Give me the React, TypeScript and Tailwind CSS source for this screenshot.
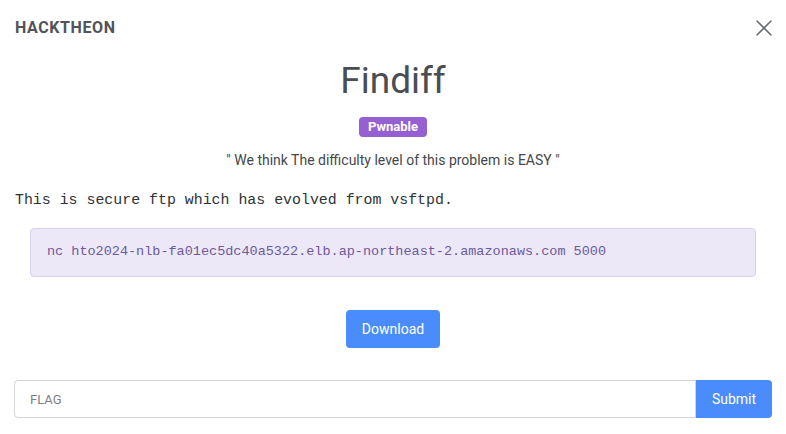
import React, { useState } from "react";

export default function App() {
    const [flag, setFlag] = useState("");

    const problem = {
        title: "Findiff",
        category: "Pwnable",
        difficulty: "EASY",
        description: "This is secure ftp which has evolved from vsftpd.",
        connection: "nc hto2024-nlb-fa01ec5dc40a5322.elb.ap-northeast-2.amazonaws.com 5000",
    };

    return (
        <div className="w-[786px] h-[434px] bg-white text-[#4a4d52] font-['Roboto','Liberation_Sans',sans-serif] overflow-hidden">
            <div className="flex items-center justify-between pl-[15px] pr-[13px] pt-[16px]">
                <span className="text-[16px] font-bold tracking-[0.6px] text-[#505458]">HACKTHEON</span>
                <button className="text-[#6b6f73]">
                    <svg width="18" height="18" viewBox="0 0 18 18" fill="none">
                        <path d="M2 2L16 16M16 2L2 16" stroke="currentColor" strokeWidth="1.6" strokeLinecap="round" />
                    </svg>
                </button>
            </div>

            <div className="flex flex-col items-center">
                <h1 className="mt-[19px] text-[37px] leading-[44px] text-[#4a4d52]">{problem.title}</h1>
                <span className="mt-[14px] h-[20px] px-[9px] flex items-center rounded-[4px] bg-[#9460d2] text-white text-[13px] font-bold">
                    {problem.category}
                </span>
                <p className="mt-[15px] text-[14px] leading-[17px] text-[#44474b]">
                    " We think The difficulty level of this problem is {problem.difficulty} "
                </p>
            </div>

            <p className="mt-[22px] pl-[15px] font-['Liberation_Mono',monospace] text-[14.9px] leading-[18px] text-[#2f3236]">
                {problem.description}
            </p>

            <div className="mt-[19px] mx-[30px] h-[49px] flex items-center px-[16px] rounded-[4px] bg-[#ece8f7] border border-[#d9d1ef] font-['Liberation_Mono',monospace] text-[13.5px] text-[#6c5a9c]">
                {problem.connection}
            </div>

            <div className="mt-[33px] flex justify-center">
                <button className="w-[94px] h-[38px] rounded-[4px] bg-[#4a8cfb] text-white text-[14px]">
                    Download
                </button>
            </div>

            <div className="mt-[32px] mx-[14px] flex">
                <input
                    className="flex-1 h-[38px] px-[15px] rounded-l-[4px] border border-[#d2d4d7] text-[13px] text-[#555] placeholder:text-[#7d8084] outline-none"
                    placeholder="FLAG"
                    value={flag}
                    onChange={(e) => setFlag(e.target.value)}
                />
                <button className="w-[76px] h-[38px] rounded-r-[4px] bg-[#4a8cfb] text-white text-[14px]">
                    Submit
                </button>
            </div>
        </div>
    );
}
